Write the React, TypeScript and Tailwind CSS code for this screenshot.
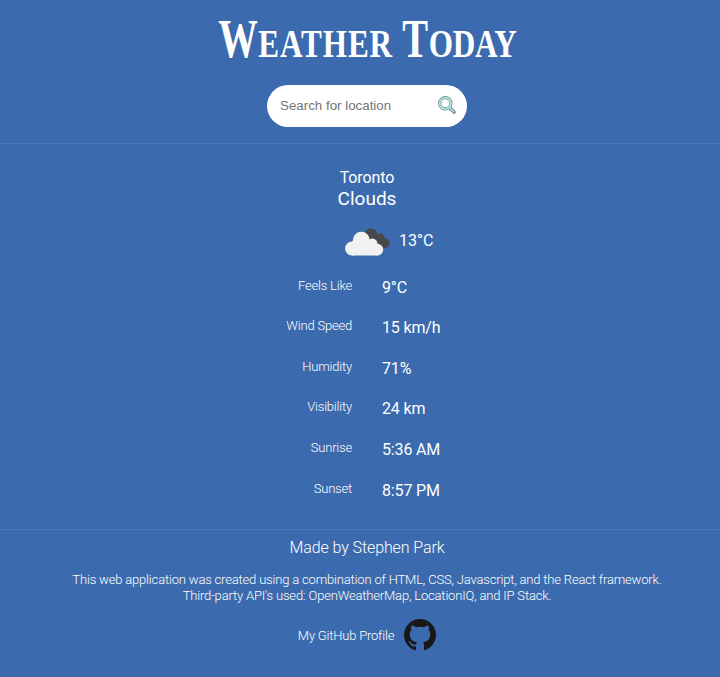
const details = [
  ["Feels Like", "9°C"],
  ["Wind Speed", "15 km/h"],
  ["Humidity", "71%"],
  ["Visibility", "24 km"],
  ["Sunrise", "5:36 AM"],
  ["Sunset", "8:57 PM"],
];

function SearchIcon() {
  return (
    <svg className="-mt-0.5 h-[18px] w-[18px]" viewBox="0 0 18 18" fill="none">
      <path d="M11.5 11.5 16 16" stroke="#728887" strokeWidth="3.6" strokeLinecap="round" />
      <circle cx="7.3" cy="7.3" r="5.6" stroke="#728887" strokeWidth="3.2" />
      <circle cx="7.3" cy="7.3" r="5.6" stroke="#a9e8e4" strokeWidth="1.8" />
      <path d="M11.3 11.3 15.8 15.8" stroke="#a9e8e4" strokeWidth="1.6" strokeLinecap="round" />
    </svg>
  );
}

function CloudsIcon() {
  return (
    <svg className="-mt-px h-[28px] w-[45px]" viewBox="0 0 45 28">
      <g fill="#48484a">
        <circle cx="26" cy="6.6" r="6.4" />
        <circle cx="34.8" cy="10" r="4.7" />
        <circle cx="39.7" cy="15.2" r="4.8" />
        <path d="M22 8H35L40 20H27Z" />
      </g>
      <g fill="#f2f2f2">
        <circle cx="16.3" cy="12.2" r="8.4" />
        <circle cx="7.2" cy="20.5" r="7.1" />
        <circle cx="27.3" cy="15.6" r="5.2" />
        <circle cx="32.3" cy="21.7" r="5.9" />
        <path d="M7 13H28L32.3 17V27.6H7Z" />
      </g>
    </svg>
  );
}

function GithubIcon() {
  return (
    <svg className="h-8 w-8" viewBox="0 0 16 16" fill="#191717">
      <path d="M8 0C3.58 0 0 3.58 0 8c0 3.54 2.29 6.53 5.47 7.59.4.07.55-.17.55-.38 0-.19-.01-.82-.01-1.49-2.01.37-2.53-.49-2.69-.94-.09-.23-.48-.94-.82-1.13-.28-.15-.68-.52-.01-.53.63-.01 1.08.58 1.23.82.72 1.21 1.87.87 2.33.66.07-.52.28-.87.51-1.07-1.78-.2-3.64-.89-3.64-3.95 0-.87.31-1.59.82-2.15-.08-.2-.36-1.02.08-2.12 0 0 .67-.21 2.2.82.64-.18 1.32-.27 2-.27s1.36.09 2 .27c1.53-1.04 2.2-.82 2.2-.82.44 1.1.16 1.92.08 2.12.51.56.82 1.27.82 2.15 0 3.07-1.87 3.75-3.65 3.95.29.25.54.73.54 1.48 0 1.07-.01 1.93-.01 2.2 0 .21.15.46.55.38A8.01 8.01 0 0 0 16 8c0-4.42-3.58-8-8-8Z" />
    </svg>
  );
}

export default function App() {
  return (
    <div className="h-[677px] w-full overflow-hidden bg-[#3b6bae] font-['Roboto',sans-serif] font-light text-white">
      <div className="flex w-[734px] flex-col">
        <header className="flex h-[144px] flex-col items-center border-b border-[#4b78b8]">
          <div className="mt-[9px] flex h-[60px] w-[298px] justify-center">
            <h1 className="scale-x-[0.8] font-['Liberation_Serif',serif] text-[55px] leading-[60px] font-bold whitespace-nowrap [font-variant:small-caps]">
              <span className="inline-block origin-left scale-x-[0.9] tracking-[-5px]">W</span>
              <span className="tracking-[1.1px]">eather</span>
              <span className="tracking-[-1.7px]"> </span>
              <span className="inline-block origin-left scale-x-[0.88] tracking-[-4px]">T</span>
              <span className="tracking-[-0.4px]">oday</span>
            </h1>
          </div>
          <div className="mt-4 flex h-[42px] w-[200px] items-center justify-between rounded-[21px] bg-white pr-[11px] pl-[13px]">
            <input
              className="w-[140px] bg-transparent font-['Liberation_Sans',sans-serif] text-[13.33px] font-normal outline-none placeholder:text-[#757575]"
              placeholder="Search for location"
            />
            <SearchIcon />
          </div>
        </header>

        <main className="flex h-[386px] flex-col border-b border-[#4b78b8]">
          <div className="mt-[23px] text-center text-base leading-[21px] font-normal tracking-[-0.1px]">Toronto</div>
          <div className="text-center text-[19px] leading-[22px] font-normal">Clouds</div>
          <div className="mt-[18px] ml-[345px] flex h-[29px] items-center gap-[9px]">
            <CloudsIcon />
            <span className="pb-[3px] text-base leading-6 font-normal">13°C</span>
          </div>
          <dl className="mt-[17.6px] flex flex-col">
            {details.map(([label, value]) => (
              <div key={label} className="flex h-[40.6px] gap-[30px]">
                <dt className="w-[352px] pt-[3px] text-right text-[13px] leading-4 tracking-[-0.2px]">{label}</dt>
                <dd className="pt-[3px] text-base leading-5 font-normal tracking-[-0.15px]">{value}</dd>
              </div>
            ))}
          </dl>
        </main>

        <footer className="flex flex-col items-center">
          <div className="mt-[7px] text-base leading-[21px] tracking-[-0.1px]">Made by Stephen Park</div>
          <p className="mt-[14px] text-center text-[13px] leading-4 tracking-[-0.175px]">
            This web application was created using a combination of HTML, CSS, Javascript, and the React framework.
            <br />
            Third-party API's used: OpenWeatherMap, LocationIQ, and IP Stack.
          </p>
          <div className="mt-[15px] flex items-center gap-[10px] text-[13px] tracking-[-0.2px]">
            <span className="pt-px">My GitHub Profile</span>
            <GithubIcon />
          </div>
        </footer>
      </div>
    </div>
  );
}
